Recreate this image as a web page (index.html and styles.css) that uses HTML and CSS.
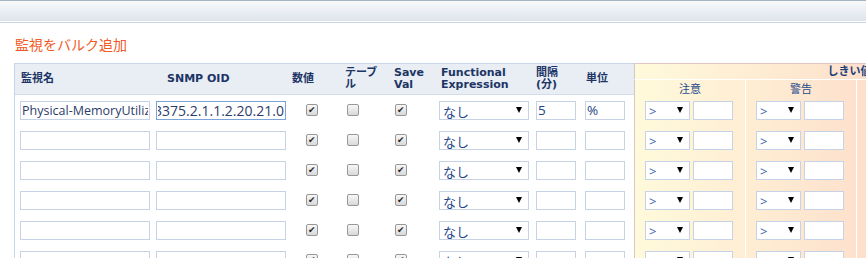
FILE: index.html
```html
<!DOCTYPE html>
<html lang="ja">
<head>
<meta charset="utf-8">
<title>監視をバルク追加</title>
<link rel="stylesheet" href="styles.css">
</head>
<body>
<div class="topbar"></div>
<h2 class="title">監視をバルク追加</h2>
<table class="bulk">
  <colgroup>
    <col class="w-name"><col class="w-oid"><col class="w-num"><col class="w-tbl"><col class="w-save"><col class="w-fx"><col class="w-int"><col class="w-unit">
    <col class="w-t1"><col class="w-t2"><col class="w-t3"><col class="w-t4">
  </colgroup>
  <thead>
    <tr>
      <th rowspan="2" class="h h-name">監視名</th>
      <th rowspan="2" class="h h-oid">SNMP OID</th>
      <th rowspan="2" class="h">数値</th>
      <th rowspan="2" class="h">テーブ<br>ル</th>
      <th rowspan="2" class="h">Save<br>Val</th>
      <th rowspan="2" class="h">Functional<br>Expression</th>
      <th rowspan="2" class="h">間隔<br>(分)</th>
      <th rowspan="2" class="h h-unit">単位</th>
      <th colspan="4" class="th-main">しきい値</th>
    </tr>
    <tr>
      <th class="ts t1">注意</th>
      <th class="ts t2">警告</th>
      <th class="ts t3">危険</th>
      <th class="ts t4">回数</th>
    </tr>
  </thead>
  <tbody>
    <tr>
      <td><input class="txt f-name" type="text" value="Physical-MemoryUtilization"></td>
      <td><input class="txt f-oid focus" type="text" value="1.3.6.1.4.1.3375.2.1.1.2.20.21.0"></td>
      <td><input class="cb cb-num" type="checkbox" checked></td>
      <td><input class="cb cb-tbl" type="checkbox"></td>
      <td><input class="cb cb-save" type="checkbox" checked></td>
      <td><span class="sel sel-fx"><select><option>なし</option></select></span></td>
      <td><input class="txt f-small" type="text" value="5"></td>
      <td><input class="txt f-small" type="text" value="%"></td>
      <td class="t1"><div class="pair"><span class="sel sel-op"><select><option>&gt;</option></select></span><input class="txt f-thr" type="text"></div></td>
      <td class="t2"><div class="pair"><span class="sel sel-op"><select><option>&gt;</option></select></span><input class="txt f-thr" type="text"></div></td>
      <td class="t3"><div class="pair"><span class="sel sel-op"><select><option>&gt;</option></select></span><input class="txt f-thr" type="text"></div></td>
      <td class="t4"><div class="pair"><input class="txt f-thr" type="text"></div></td>
    </tr>
    <tr>
      <td><input class="txt f-name" type="text"></td>
      <td><input class="txt f-oid" type="text"></td>
      <td><input class="cb cb-num" type="checkbox" checked></td>
      <td><input class="cb cb-tbl" type="checkbox"></td>
      <td><input class="cb cb-save" type="checkbox" checked></td>
      <td><span class="sel sel-fx"><select><option>なし</option></select></span></td>
      <td><input class="txt f-small" type="text"></td>
      <td><input class="txt f-small" type="text"></td>
      <td class="t1"><div class="pair"><span class="sel sel-op"><select><option>&gt;</option></select></span><input class="txt f-thr" type="text"></div></td>
      <td class="t2"><div class="pair"><span class="sel sel-op"><select><option>&gt;</option></select></span><input class="txt f-thr" type="text"></div></td>
      <td class="t3"><div class="pair"><span class="sel sel-op"><select><option>&gt;</option></select></span><input class="txt f-thr" type="text"></div></td>
      <td class="t4"><div class="pair"><input class="txt f-thr" type="text"></div></td>
    </tr>
    <tr>
      <td><input class="txt f-name" type="text"></td>
      <td><input class="txt f-oid" type="text"></td>
      <td><input class="cb cb-num" type="checkbox" checked></td>
      <td><input class="cb cb-tbl" type="checkbox"></td>
      <td><input class="cb cb-save" type="checkbox" checked></td>
      <td><span class="sel sel-fx"><select><option>なし</option></select></span></td>
      <td><input class="txt f-small" type="text"></td>
      <td><input class="txt f-small" type="text"></td>
      <td class="t1"><div class="pair"><span class="sel sel-op"><select><option>&gt;</option></select></span><input class="txt f-thr" type="text"></div></td>
      <td class="t2"><div class="pair"><span class="sel sel-op"><select><option>&gt;</option></select></span><input class="txt f-thr" type="text"></div></td>
      <td class="t3"><div class="pair"><span class="sel sel-op"><select><option>&gt;</option></select></span><input class="txt f-thr" type="text"></div></td>
      <td class="t4"><div class="pair"><input class="txt f-thr" type="text"></div></td>
    </tr>
    <tr>
      <td><input class="txt f-name" type="text"></td>
      <td><input class="txt f-oid" type="text"></td>
      <td><input class="cb cb-num" type="checkbox" checked></td>
      <td><input class="cb cb-tbl" type="checkbox"></td>
      <td><input class="cb cb-save" type="checkbox" checked></td>
      <td><span class="sel sel-fx"><select><option>なし</option></select></span></td>
      <td><input class="txt f-small" type="text"></td>
      <td><input class="txt f-small" type="text"></td>
      <td class="t1"><div class="pair"><span class="sel sel-op"><select><option>&gt;</option></select></span><input class="txt f-thr" type="text"></div></td>
      <td class="t2"><div class="pair"><span class="sel sel-op"><select><option>&gt;</option></select></span><input class="txt f-thr" type="text"></div></td>
      <td class="t3"><div class="pair"><span class="sel sel-op"><select><option>&gt;</option></select></span><input class="txt f-thr" type="text"></div></td>
      <td class="t4"><div class="pair"><input class="txt f-thr" type="text"></div></td>
    </tr>
    <tr>
      <td><input class="txt f-name" type="text"></td>
      <td><input class="txt f-oid" type="text"></td>
      <td><input class="cb cb-num" type="checkbox" checked></td>
      <td><input class="cb cb-tbl" type="checkbox"></td>
      <td><input class="cb cb-save" type="checkbox" checked></td>
      <td><span class="sel sel-fx"><select><option>なし</option></select></span></td>
      <td><input class="txt f-small" type="text"></td>
      <td><input class="txt f-small" type="text"></td>
      <td class="t1"><div class="pair"><span class="sel sel-op"><select><option>&gt;</option></select></span><input class="txt f-thr" type="text"></div></td>
      <td class="t2"><div class="pair"><span class="sel sel-op"><select><option>&gt;</option></select></span><input class="txt f-thr" type="text"></div></td>
      <td class="t3"><div class="pair"><span class="sel sel-op"><select><option>&gt;</option></select></span><input class="txt f-thr" type="text"></div></td>
      <td class="t4"><div class="pair"><input class="txt f-thr" type="text"></div></td>
    </tr>
    <tr>
      <td><input class="txt f-name" type="text"></td>
      <td><input class="txt f-oid" type="text"></td>
      <td><input class="cb cb-num" type="checkbox" checked></td>
      <td><input class="cb cb-tbl" type="checkbox"></td>
      <td><input class="cb cb-save" type="checkbox" checked></td>
      <td><span class="sel sel-fx"><select><option>なし</option></select></span></td>
      <td><input class="txt f-small" type="text"></td>
      <td><input class="txt f-small" type="text"></td>
      <td class="t1"><div class="pair"><span class="sel sel-op"><select><option>&gt;</option></select></span><input class="txt f-thr" type="text"></div></td>
      <td class="t2"><div class="pair"><span class="sel sel-op"><select><option>&gt;</option></select></span><input class="txt f-thr" type="text"></div></td>
      <td class="t3"><div class="pair"><span class="sel sel-op"><select><option>&gt;</option></select></span><input class="txt f-thr" type="text"></div></td>
      <td class="t4"><div class="pair"><input class="txt f-thr" type="text"></div></td>
    </tr>
  </tbody>
</table>
<script src="app.js"></script>
</body>
</html>
```

FILE: styles.css
```css
html, body {
  margin: 0;
  padding: 0;
  overflow: hidden;
  background: #fff;
}
body {
  width: 866px;
  height: 258px;
  font-family: "DejaVu Sans", "Noto Sans CJK JP", sans-serif;
}

.topbar {
  height: 20px;
  border-top: 1px solid #a3b5c4;
  border-bottom: 1px solid #fff;
  background: linear-gradient(#f8f9fb, #dde4eb);
  box-shadow: 0 1px 0 #c8d7e3;
}

.title {
  margin: 12px 0 0 15px;
  font: normal 14px/20px "Noto Sans CJK JP", sans-serif;
  color: #f15a24;
}

.bulk {
  margin: 9px 0 0 14px;
  border-collapse: separate;
  border-spacing: 0;
  table-layout: fixed;
  width: 1050px;
  border-left: 1px solid #c8d6ea;
}
.w-name { width: 138px; }
.w-oid { width: 136px; }
.w-num { width: 53px; }
.w-tbl { width: 49px; }
.w-save { width: 47px; }
.w-fx { width: 95px; }
.w-int { width: 49px; }
.w-unit { width: 52px; }
.w-t1 { width: 112px; }
.w-t2 { width: 111px; }
.w-t3 { width: 111px; }
.w-t4 { width: 96px; }

th {
  font: bold 11px/12px "DejaVu Sans", "Noto Sans CJK JP", sans-serif;
  padding: 0;
}
.h {
  background: #e9edf4;
  border-top: 1px solid #c9d6e8;
  border-bottom: 1px solid #d3dde9;
  color: #1c3566;
  text-align: left;
  vertical-align: middle;
  padding-left: 3px;
}
.h-name { padding-left: 6px; }
.h-oid { padding-left: 14px; }
.h-unit { padding-left: 4px; }

.th-main {
  height: 15px;
  border-top: 1px solid #e3c5c3;
  border-bottom: 1px solid #fff;
  border-left: 1px solid #d9c7bd;
  color: #1a3d7c;
  text-align: center;
  vertical-align: middle;
  background: #fdd8c7 linear-gradient(90deg, #fffadb, #fdd8c7) no-repeat 0 0 / 300px 100%;
}
.ts {
  height: 11px;
  padding-top: 4px;
  line-height: 11px;
  font-weight: normal;
  color: #1f4b8c;
  text-align: center;
  vertical-align: middle;
}

td {
  height: 30px;
  padding: 0;
  vertical-align: middle;
}

/* threshold columns share one continuous gradient */
.t1, .t2, .t3, .t4 {
  background: #fdd8c7 linear-gradient(90deg, #fffadb, #fdd8c7) no-repeat 0 0 / 300px 100%;
  border-right: 1px solid #fff;
}
.t1 { border-left: 1px solid #d9c7bd; background-position: 0 0; }
.t2 { background-position: -111px 0; }
.t3 { background-position: -222px 0; }
.t4 { background-position: -333px 0; }

.txt {
  display: block;
  box-sizing: border-box;
  height: 19px;
  margin: 0;
  padding: 0 1px;
  border: 1px solid #c6d3e6;
  border-radius: 0;
  background: #fff;
  font: 13.5px "Open Sans", "Noto Sans CJK JP", sans-serif;
  color: #2d3c6b;
  outline: none;
}
.txt.focus { border-color: #7ba3d9; }
.f-name { width: 130px; margin-left: 5px; font-size: 12.5px; }
.f-oid { width: 130px; margin-left: 3px; font-size: 14px; }
.f-small { width: 40px; margin-left: 3px; color: #1d4585; }
.f-thr { width: 40px; }

.cb {
  display: block;
  position: relative;
  appearance: none;
  -webkit-appearance: none;
  box-sizing: border-box;
  width: 12px;
  height: 12px;
  margin: 0;
  border: 1px solid #979797;
  border-radius: 2px;
  background: linear-gradient(#f7f7f7, #d9d9d9);
}
.cb:checked::after {
  content: "\2714";
  position: absolute;
  left: 1px;
  top: -1px;
  font: 9px/12px "DejaVu Sans", sans-serif;
  color: #262626;
}
.cb-num { margin-left: 17px; }
.cb-tbl { margin-left: 5px; }
.cb-save { margin-left: 4px; }

.sel {
  position: relative;
  display: block;
}
.sel::after {
  content: "";
  position: absolute;
  right: 7px;
  top: 50%;
  margin-top: -3px;
  border-left: 3.5px solid transparent;
  border-right: 3.5px solid transparent;
  border-top: 6px solid #000;
  pointer-events: none;
}
.sel select {
  appearance: none;
  -webkit-appearance: none;
  display: block;
  box-sizing: border-box;
  width: 100%;
  height: 19px;
  margin: 0;
  padding: 0 0 0 3px;
  border: 1px solid #c6d3e6;
  border-radius: 0;
  background: #fff;
  font: 13px "Noto Sans CJK JP", sans-serif;
  color: #1c4687;
  outline: none;
}
.sel-fx { width: 90px; margin-left: 1px; }
.sel-op { width: 45px; }
.sel-op select { color: #3b62b0; font-family: "Open Sans", sans-serif; }

.pair {
  display: flex;
  gap: 3px;
  padding-left: 10px;
}
```

FILE: app.js
```js
(function () {
  var el = document.querySelector('.txt.focus');
  if (!el) return;
  el.focus();
  var n = el.value.length;
  el.setSelectionRange(n, n);
  el.scrollLeft = el.scrollWidth;
})();
```
